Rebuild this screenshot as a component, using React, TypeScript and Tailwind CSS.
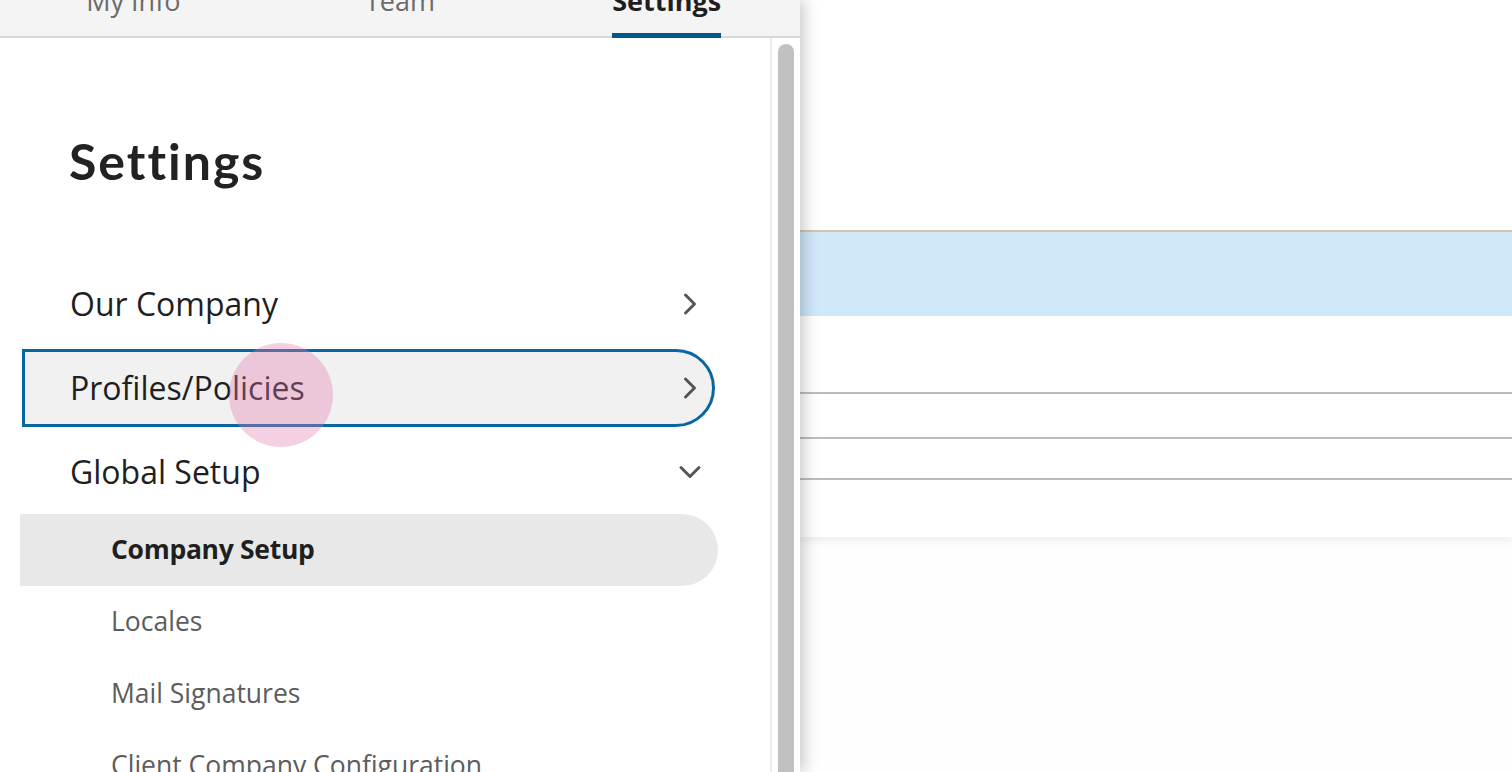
import { ChevronRight, ChevronDown } from 'lucide-react'

const tabs = [
  { label: 'My Info', active: false },
  { label: 'Team', active: false },
  { label: 'Settings', active: true },
]

const subItems = [
  { label: 'Company Setup', active: true },
  { label: 'Locales', active: false },
  { label: 'Mail Signatures', active: false },
  { label: 'Client Company Configuration', active: false },
]

function TabBar() {
  return (
    <div className="grid grid-cols-3 h-[38px] bg-[#f4f4f4] shadow-[inset_0_-2px_0_#d8d8d8] overflow-hidden">
      {tabs.map((tab) => (
        <div key={tab.label} className="flex justify-center">
          <div className="flex flex-col h-[38px]">
            <span
              className={`-mt-[13px] leading-[27px] text-[27px] whitespace-nowrap ${
                tab.active ? 'font-bold text-[#1f1f1f]' : 'text-[#6b6b6b]'
              }`}
            >
              {tab.label}
            </span>
            {tab.active && <div className="mt-auto h-[5px] bg-[#00578a]" />}
          </div>
        </div>
      ))}
    </div>
  )
}

function MainRow({ label, open, focused }: { label: string; open?: boolean; focused?: boolean }) {
  const Icon = open ? ChevronDown : ChevronRight
  if (focused) {
    return (
      <div className="h-[84px] py-[3px] pl-[22px] pr-[55px]">
        <div className="relative h-full flex items-center justify-between pl-[45px] pr-[4px] border-[3px] border-[#0a66a0] rounded-r-full bg-[#f1f1f1]">
          <span className="text-[32px] text-[#1f1f1f]">{label}</span>
          <Icon className="w-[36px] h-[36px] text-[#555]" strokeWidth={2} />
          {/* touch indicator */}
          <div className="absolute left-[204px] top-[-9px] w-[104px] h-[104px] rounded-full bg-[rgba(226,121,175,0.35)]" />
        </div>
      </div>
    )
  }
  return (
    <div className="h-[84px] flex items-center justify-between pl-[70px] pr-[62px]">
      <span className="text-[32px] text-[#1f1f1f]">{label}</span>
      <Icon className="w-[36px] h-[36px] text-[#555]" strokeWidth={2} />
    </div>
  )
}

function Sidebar() {
  return (
    <div className="relative z-10 w-[800px] h-[772px] flex flex-col bg-white shadow-[4px_0_14px_rgba(0,0,0,0.22)]">
      <TabBar />
      <div className="flex flex-1 min-h-0">
        <div className="flex-1 overflow-hidden">
          <h1 className="mt-[93px] pl-[69px] text-[50px] leading-[60px] font-bold text-[#222] tracking-[2px] font-['Lato',sans-serif]">
            Settings
          </h1>
          <div className="mt-[71px]">
            <MainRow label="Our Company" />
            <MainRow label="Profiles/Policies" focused />
            <MainRow label="Global Setup" open />
            <div className="flex flex-col">
              {subItems.map((item) => (
                <div
                  key={item.label}
                  className={`h-[72px] w-[698px] ml-[20px] flex items-center pl-[91px] text-[26.5px] whitespace-nowrap ${
                    item.active ? 'bg-[#e8e8e8] rounded-r-full font-bold text-[#1f1f1f] tracking-[-0.3px]' : 'text-[#5c5c5c]'
                  }`}
                >
                  {item.label}
                </div>
              ))}
            </div>
          </div>
        </div>
        {/* scrollbar */}
        <div className="w-[30px] border-l-2 border-[#ebebeb] pl-[6px] pr-[4px] pt-[6px] bg-white">
          <div className="h-full w-[16px] rounded-t-full bg-[#c1c1c1]" />
        </div>
      </div>
    </div>
  )
}

function Content() {
  return (
    <div className="flex-1 bg-[#fefefe]">
      <div className="bg-white shadow-[0_3px_10px_rgba(0,0,0,0.08)]">
        <div className="h-[230px]" />
        <div className="h-[2px] bg-[#d2c7ad]" />
        <div className="h-[84px] bg-[#cfe8fa]" />
        <div className="h-[76px]" />
        <div className="h-[2px] bg-[#bdbdbd]" />
        <div className="h-[43px]" />
        <div className="h-[2px] bg-[#bdbdbd]" />
        <div className="h-[39px]" />
        <div className="h-[2px] bg-[#bdbdbd]" />
        <div className="h-[57px]" />
      </div>
    </div>
  )
}

export default function App() {
  return (
    <div className="flex w-[1512px] h-[772px] overflow-hidden bg-white font-['Open_Sans','Noto_Sans',sans-serif]">
      <Sidebar />
      <Content />
    </div>
  )
}
